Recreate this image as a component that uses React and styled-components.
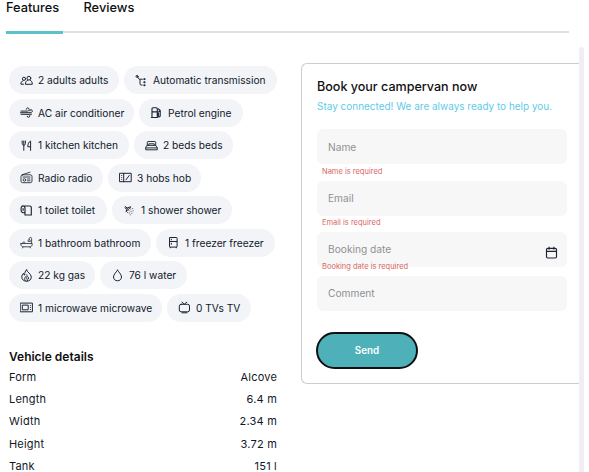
import React from 'react';
import styled, { createGlobalStyle } from 'styled-components';

const GlobalStyle = createGlobalStyle`
  * { box-sizing: border-box; }
  html, body { margin: 0; padding: 0; background: #fff; overflow: hidden; }
  body { font-family: Inter, "Liberation Sans", sans-serif; color: #101828; }
  h2, h3, p, dl, dt, dd, ul { margin: 0; padding: 0; font-weight: inherit; }
`;

const Page = styled.main`
  width: 589px;
  height: 472px;
  overflow: hidden;
`;

const Tabs = styled.nav`
  display: flex;
  gap: 20.5px;
  width: 563px;
  height: 33px;
  margin-left: 6px;
  border-bottom: 2px solid #e0e0e0;
`;

const Tab = styled.a`
  height: 34px;
  width: 57px;
  white-space: nowrap;
  font-size: 12.8px;
  line-height: 16px;
  font-weight: 500;
  color: #101010;
  border-bottom: 3px solid ${(p) => (p.$active ? '#5bc2cb' : 'transparent')};
`;

const Content = styled.div`
  display: flex;
  justify-content: space-between;
  width: 575px;
  margin: 14px 0 0 9px;
`;

const Left = styled.section`
  width: 275px;
  padding-top: 19px;
`;

const Chips = styled.ul`
  display: flex;
  flex-direction: column;
  gap: 4.5px;
`;

const ChipRow = styled.li`
  display: flex;
  gap: 5px;
`;

const Chip = styled.span`
  display: flex;
  align-items: center;
  flex: none;
  width: ${(p) => p.$width}px;
  height: 28px;
  padding-left: 11px;
  gap: 5px;
  border-radius: 14px;
  background: #f2f4f8;
  font-size: 10.2px;
  line-height: 14px;
  white-space: nowrap;
  color: #101828;
`;

const Icon = styled.svg`
  flex: none;
  width: 13px;
  height: 13px;
  fill: none;
  stroke: #1d2433;
  stroke-width: 1;
  stroke-linecap: round;
  stroke-linejoin: round;
`;

const DetailsTitle = styled.h3`
  margin-top: 27px;
  font-size: 12px;
  line-height: 16px;
  font-weight: 600;
  color: #101010;
`;

const Details = styled.dl`
  width: 268px;
  padding-top: 1.4px;
`;

const Detail = styled.div`
  display: flex;
  justify-content: space-between;
  height: 22.25px;
  font-size: 11px;
  line-height: 22px;
  letter-spacing: 0.2px;
  color: #101828;
`;

const Right = styled.section`
  display: flex;
  align-items: flex-start;
`;

const Card = styled.form`
  width: 278px;
  height: 321px;
  margin-top: 16px;
  padding: 15px 12px 0 15px;
  border: 1px solid #cdcdcd;
  border-right: 0;
  border-radius: 6px 0 0 6px;
`;

const Track = styled.div`
  width: 5px;
  height: 430px;
  border-radius: 3px 3px 0 0;
  background: #efeff3;
`;

const CardTitle = styled.h2`
  font-size: 12.55px;
  line-height: 16px;
  font-weight: 500;
  color: #101010;
`;

const Subtitle = styled.p`
  margin: 4px 0 16px;
  font-size: 9.98px;
  line-height: 14px;
  white-space: nowrap;
  color: #61cbe8;
`;

const Field = styled.label`
  display: flex;
  align-items: center;
  justify-content: space-between;
  width: 250px;
  height: 35px;
  padding: 0 9px ${(p) => (p.$raised ? 2 : 0)}px 11px;
  border-radius: 6px;
  background: #f7f7f7;
  font-size: 10.2px;
  color: #8f9193;
`;

const DateIcon = styled(Icon)`
  margin-top: 7px;
  stroke-width: 1.15;
`;

const FieldError = styled.p`
  height: ${(p) => p.$height}px;
  margin-top: ${(p) => p.$lift || 0}px;
  padding-left: 5px;
  font-size: 7.5px;
  line-height: ${(p) => p.$line || 16}px;
  color: #d96666;
`;

const Send = styled.button`
  display: block;
  width: 102px;
  height: 37px;
  margin: 21px 0 0 -1px;
  padding: 1px 0 0;
  border: 2px solid #101010;
  border-radius: 19px;
  background: #4eb1ba;
  color: #fff;
  font: 600 9.8px/14px Inter, sans-serif;
`;

const icons = {
  adults: (
    <>
      <circle cx="4" cy="4.8" r="1.6" />
      <path d="M3.1 6.7C1.5 7.3.9 8.5.9 10.2h2.6" />
      <circle cx="8.9" cy="4.2" r="1.9" />
      <path d="M7.7 6.1C6.1 6.9 5.4 8.2 5.4 10.3h6.9c0-2.1-.7-3.4-2.2-4.2" />
    </>
  ),
  transmission: (
    <>
      <circle cx="2" cy="2.4" r="1" />
      <path d="M2.8 3.2c.5 1.6 1 2 2.5 2h2M5 5.5v4.3c0 .8.4 1.2 1.2 1.2h1" />
      <path d="M9.2 4.7h.9v.9h-.9zM9.2 7.8h.9v.9h-.9zM9.2 10.8h.9v.9h-.9z" />
    </>
  ),
  air: (
    <path d="M1 5.1h6.3c2.6 0 2.2-3.2.4-3.2-1 0-1.4.6-1.4 1.3M.5 6.7h9.7c2.8 0 2.5-3 .8-3-.8 0-1.3.5-1.3 1.1M1 8.3h7c2.5 0 2.2 3 .5 3-.9 0-1.3-.5-1.3-1.1M9.6 8.2h2" />
  ),
  petrol: (
    <path
      strokeWidth="1.15"
      d="M2 11.3V2.8c0-.7.4-1.1 1.1-1.1h3.1c.7 0 1.1.4 1.1 1.1v8.5M1.4 11.5h6.4M2.2 5.8h5M7.4 6.7h1v3c0 1.5 1.8 1.5 1.8 0V4.5L8.4 2.8M8.7 5.3h1.4"
    />
  ),
  kitchen: (
    <path d="M2.2 2v2.5c0 2.4 3.2 2.4 3.2 0V2M3.8 2v9.3M10.6 11.4V2C8.7 3 7.8 5.1 7.8 7.8h2.8" />
  ),
  bed: (
    <path
      strokeWidth=".95"
      d="M2.3 6.3V3.3c0-.5.3-.8.8-.8h6.8c.5 0 .8.3.8.8v3M3.8 6.2V4.8h5.4v1.4M2.3 6.4h8.4l1.6 2.4v2H.7v-2zM.9 8.9h11.2"
    />
  ),
  radio: (
    <g strokeWidth=".85">
      <rect x="1" y="3.8" width="11" height="7.9" rx="1.6" />
      <path d="M2.3 3.7L10 1.2M3 6h7M7.5 8h2.5M7.5 9.8h2.5" />
      <circle cx="4.4" cy="8.9" r="1.3" />
    </g>
  ),
  hob: (
    <path d="M.8 2.3h11.4v8.4H.8zM4.7 2.3v8.4M2.7 4.4v.1M2.7 6.5v.1M2.7 8.6v.1M7 8.8l3.2-4.3" />
  ),
  toilet: (
    <path
      strokeWidth="1.15"
      d="M3 2h6.8c1 0 1.5.6 1.5 1.6V11H5V4.6C5 1 1.1 1 1.1 4.6v1.7C1.1 8.8 3.4 9.2 5 8.2M3.1 4.6v1.7"
    />
  ),
  shower: (
    <>
      <path d="M2.2 2.5l2.1 1.6 2.8-1.3M4.3 4.1L3.1 7.4M3.2 7.5L7.8 3M2 3.9l1.2.8" />
      <path strokeWidth=".8" d="M6 6.6h.1M7.7 5h.1M9.7 4.6h.1M8 7.6h.1M10 6.8h.1M6.2 9h.1M8.8 9.3h.1M4.6 8.5h.1M7.2 10.8h.1" />
    </>
  ),
  bath: (
    <path
      strokeWidth=".8"
      d="M.8 7.5h11.4v.8c0 1.7-1.2 2.5-2.8 2.5H3.8C2 10.8.8 9.8.8 8.3zM3 11l-.4.9M10 11l.4.9M11.6 7.3V2.6c0-1.6-2.1-1.6-2.4 0v.9M8 5c0-2 2.4-2 2.4 0zM2.4 7.2c.1-1.5 2-1.6 2.8-.5"
    />
  ),
  freezer: (
    <>
      <rect x="2.5" y="1.5" width="7.6" height="9.6" rx=".6" />
      <path d="M2.5 5.5h7.6M4.3 3.2v.7M4.3 7.3v1M3.3 11.3v.5M9.3 11.3v.5" />
    </>
  ),
  gas: (
    <>
      <path d="M6.5.9c.1 2.1 4.8 3.8 4.8 7.2 0 2.6-2 4.1-4.7 4.1s-4.8-1.5-4.8-4.2c0-1.5.6-2.7 1.7-3.7.2 1.2.6 1.7 1.2 1.9C4.6 3.8 5.1 2.2 6.5.9z" />
      <path d="M6.7 5.8c0 1.6 2.1 1.8 2 4M5.5 11.9c-1.7-1.8-.6-3.4.5-4.5.1 1.8 1.7 2.2 1.4 4.5" />
    </>
  ),
  water: (
    <path d="M6.5 1.2C4.8 3.6 2.5 5.7 2.5 8c0 2.3 1.8 3.8 4 3.8s4-1.5 4-3.8c0-2.3-2.3-4.4-4-6.8z" />
  ),
  microwave: (
    <>
      <path d="M.6 2.1h11.8v8.7H.6z" />
      <path d="M2.7 4.1h5.5v4.7H2.7zM10.4 4.5v.1M10.4 6.4v.1M10.4 8.4v.1" />
    </>
  ),
  tv: (
    <>
      <rect x="1.3" y="3.3" width="10.2" height="7.5" rx="1.8" />
      <path d="M4 1.2l2.4 1.9L8.8 1.2M4 11.8h5" />
    </>
  ),
  calendar: (
    <>
      <rect x="1.5" y="2.3" width="10" height="9.7" rx="1.2" />
      <path d="M1.5 5.4h10M4.1 1v2.2M8.9 1v2.2" />
    </>
  ),
};

const featureRows = [
  [['adults', '2 adults adults', 110], ['transmission', 'Automatic transmission', 153]],
  [['air', 'AC air conditioner', 125], ['petrol', 'Petrol engine', 104]],
  [['kitchen', '1 kitchen kitchen', 120], ['bed', '2 beds beds', 99]],
  [['radio', 'Radio radio', 94], ['hob', '3 hobs hob', 93]],
  [['toilet', '1 toilet toilet', 98], ['shower', '1 shower shower', 120]],
  [['bath', '1 bathroom bathroom', 142], ['freezer', '1 freezer freezer', 119]],
  [['gas', '22 kg gas', 86], ['water', '76 l water', 87]],
  [['microwave', '1 microwave microwave', 153], ['tv', '0 TVs TV', 84]],
];

const details = [
  ['Form', 'Alcove'],
  ['Length', '6.4 m'],
  ['Width', '2.34 m'],
  ['Height', '3.72 m'],
  ['Tank', '151 l'],
];

export default function App() {
  return (
    <Page>
      <GlobalStyle />
      <Tabs>
        <Tab $active>Features</Tab>
        <Tab>Reviews</Tab>
      </Tabs>
      <Content>
        <Left>
          <Chips>
            {featureRows.map((row, i) => (
              <ChipRow key={i}>
                {row.map(([icon, label, width]) => (
                  <Chip key={icon} $width={width}>
                    <Icon viewBox="0 0 13 13">{icons[icon]}</Icon>
                    {label}
                  </Chip>
                ))}
              </ChipRow>
            ))}
          </Chips>
          <DetailsTitle>Vehicle details</DetailsTitle>
          <Details>
            {details.map(([name, value]) => (
              <Detail key={name}>
                <dt>{name}</dt>
                <dd>{value}</dd>
              </Detail>
            ))}
          </Details>
        </Left>
        <Right>
          <Card>
            <CardTitle>Book your campervan now</CardTitle>
            <Subtitle>Stay connected! We are always ready to help you.</Subtitle>
            <Field>Name</Field>
            <FieldError $height={17}>Name is required</FieldError>
            <Field $raised>Email</Field>
            <FieldError $height={16} $line={14}>Email is required</FieldError>
            <Field $raised>
              Booking date
              <DateIcon viewBox="0 0 13 13">{icons.calendar}</DateIcon>
            </Field>
            <FieldError $height={17} $lift={-8}>Booking date is required</FieldError>
            <Field $raised>Comment</Field>
            <Send type="button">Send</Send>
          </Card>
          <Track />
        </Right>
      </Content>
    </Page>
  );
}
